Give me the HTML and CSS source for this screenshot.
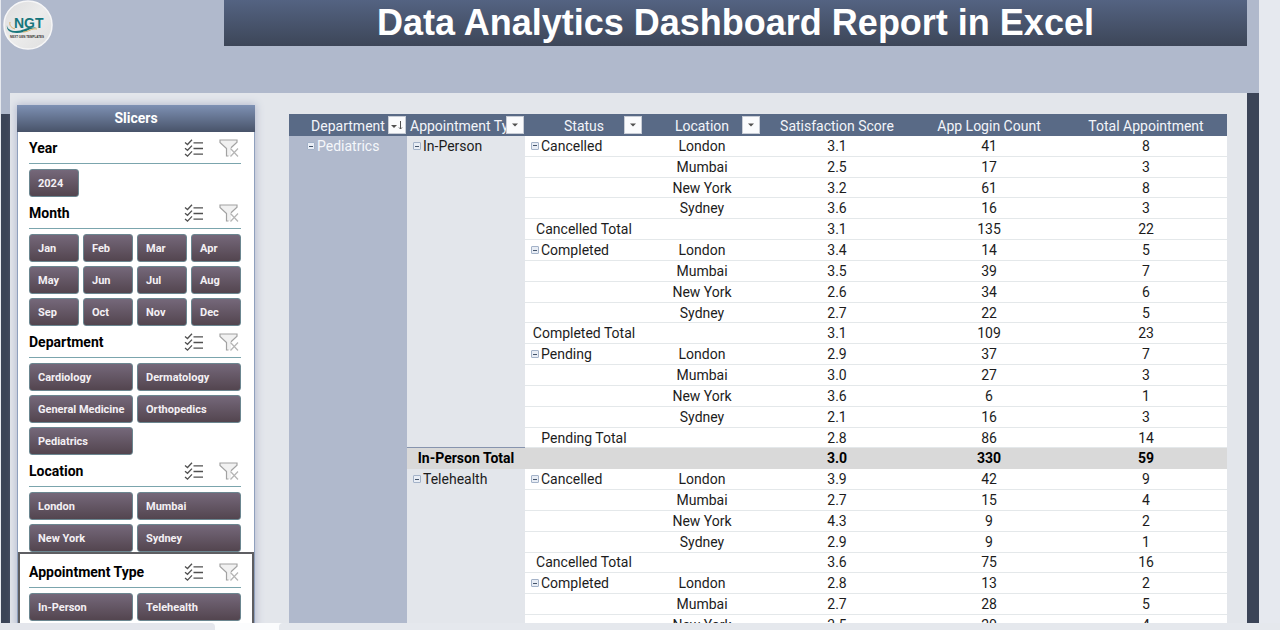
FILE: index.html
```html
<!DOCTYPE html>
<html lang="en">
<head>
<meta charset="utf-8">
<meta name="viewport" content="width=device-width, initial-scale=1">
<title>Data Analytics Dashboard Report in Excel</title>
<link rel="stylesheet" href="styles.css">
</head>
<body>
<svg class="sprites" aria-hidden="true">
  <symbol id="i-multi" viewBox="0 0 20 18">
    <g fill="none" stroke="#505050" stroke-width="1.3">
      <path d="M1 3.500l2.500 2L8 .8M1 9.300l2.500 2L8 6.600M1 15.100l2.500 2L8 12.400"/>
      <path d="M9.500 3.800H19M9.500 9.500H19M9.500 15.200H19"/>
    </g>
  </symbol>
  <symbol id="i-clear" viewBox="0 0 20 18">
    <path d="M1 1h17v2.500l-6 6V17H8V9.500l-7-6z" fill="#f1f1f1"/>
    <path d="M12 8.800l6-5.500V1H1v2.500l6.500 6V17h2" fill="none" stroke="#a2a2a2" stroke-width="1.200"/>
    <path d="M11.500 9.500l7.500 8M19 9.500l-7.500 8" fill="none" stroke="#b5b5b5" stroke-width="1.200"/>
  </symbol>
</svg>

<div class="app">
  <div class="viewport">
    <div class="canvas">
      <header class="top">
        <svg class="logo" viewBox="0 0 50 50" role="img" aria-label="NGT Next Gen Templates">
          <defs>
            <linearGradient id="disc" x1="0" y1="0" x2="1" y2="1"><stop offset="0" stop-color="#dcdcdd"/><stop offset=".5" stop-color="#ececec"/><stop offset="1" stop-color="#dedede"/></linearGradient>
          </defs>
          <circle cx="25" cy="25" r="24" fill="url(#disc)" stroke="#f6f6f7" stroke-width="1.500"/>
          <path d="M4 25c0 4 4 6 9 6 8 0 11-5 21-3-8 0-11 5-20 5C7 33 3 30 4 25z" fill="#17767c"/>
          <path d="M7 22c-1 4 2 6 5 7M20 32c6 0 8-4 14-3" fill="none" stroke="#d8b26b" stroke-width="1"/>
          <text class="logo-name" x="11" y="28">NGT</text>
          <text class="logo-tag" x="7" y="38">NEXT GEN TEMPLATES</text>
        </svg>
        <h1 class="title">Data Analytics Dashboard Report in Excel</h1>
      </header>

      <main class="body">
        <div class="board">
          <aside class="slicers">
            <h2 class="slicers-title">Slicers</h2>

            <section class="slicer">
              <div class="slicer-head"><h3>Year</h3><button class="tool" aria-label="Multi-select year"><svg><use href="#i-multi"/></svg></button><button class="tool" aria-label="Clear year filter"><svg><use href="#i-clear"/></svg></button></div>
              <div class="items items-4"><button>2024</button></div>
            </section>

            <section class="slicer">
              <div class="slicer-head"><h3>Month</h3><button class="tool" aria-label="Multi-select month"><svg><use href="#i-multi"/></svg></button><button class="tool" aria-label="Clear month filter"><svg><use href="#i-clear"/></svg></button></div>
              <div class="items items-4"><button>Jan</button><button>Feb</button><button>Mar</button><button>Apr</button><button>May</button><button>Jun</button><button>Jul</button><button>Aug</button><button>Sep</button><button>Oct</button><button>Nov</button><button>Dec</button></div>
            </section>

            <section class="slicer">
              <div class="slicer-head"><h3>Department</h3><button class="tool" aria-label="Multi-select department"><svg><use href="#i-multi"/></svg></button><button class="tool" aria-label="Clear department filter"><svg><use href="#i-clear"/></svg></button></div>
              <div class="items items-2"><button>Cardiology</button><button>Dermatology</button><button>General Medicine</button><button>Orthopedics</button><button>Pediatrics</button></div>
            </section>

            <section class="slicer">
              <div class="slicer-head"><h3>Location</h3><button class="tool" aria-label="Multi-select location"><svg><use href="#i-multi"/></svg></button><button class="tool" aria-label="Clear location filter"><svg><use href="#i-clear"/></svg></button></div>
              <div class="items items-2"><button>London</button><button>Mumbai</button><button>New York</button><button>Sydney</button></div>
            </section>

            <section class="slicer slicer-active">
              <div class="slicer-head"><h3>Appointment Type</h3><button class="tool" aria-label="Multi-select appointment type"><svg><use href="#i-multi"/></svg></button><button class="tool" aria-label="Clear appointment type filter"><svg><use href="#i-clear"/></svg></button></div>
              <div class="items items-2"><button>In-Person</button><button>Telehealth</button></div>
            </section>
          </aside>

          <div class="pivot-wrap">
            <table class="pivot">
              <colgroup><col class="c-field"><col class="c-field"><col class="c-field"><col class="c-field"><col class="c-num"><col class="c-num"><col></colgroup>
              <thead>
                <tr>
                  <th>Department<button class="filter" aria-label="Sort and filter department"><svg viewBox="0 0 16 16"><path d="M2 8h6l-3 3z" fill="#505050"/><path d="M11.500 4v8M10 10.500l1.500 1.500 1.500-1.500" fill="none" stroke="#505050"/></svg></button></th>
                  <th class="th-left">Appointment Type<button class="filter" aria-label="Filter appointment type"><svg viewBox="0 0 16 16"><path d="M5 6.500h6l-3 3z" fill="#505050"/></svg></button></th>
                  <th>Status<button class="filter" aria-label="Filter status"><svg viewBox="0 0 16 16"><path d="M5 6.500h6l-3 3z" fill="#505050"/></svg></button></th>
                  <th>Location<button class="filter" aria-label="Filter location"><svg viewBox="0 0 16 16"><path d="M5 6.500h6l-3 3z" fill="#505050"/></svg></button></th>
                  <th>Satisfaction Score</th><th>App Login Count</th><th>Total Appointment</th>
                </tr>
              </thead>
              <tbody>
                <tr><td class="dept" rowspan="24"><button class="toggle" aria-label="Collapse Pediatrics"></button>Pediatrics</td><td class="type" rowspan="15"><button class="toggle" aria-label="Collapse In-Person"></button>In-Person</td><td class="group"><button class="toggle" aria-label="Collapse Cancelled"></button>Cancelled</td><td>London</td><td>3.1</td><td>41</td><td>8</td></tr>
                <tr><td></td><td>Mumbai</td><td>2.5</td><td>17</td><td>3</td></tr>
                <tr><td></td><td>New York</td><td>3.2</td><td>61</td><td>8</td></tr>
                <tr><td></td><td>Sydney</td><td>3.6</td><td>16</td><td>3</td></tr>
                <tr><td>Cancelled Total</td><td></td><td>3.1</td><td>135</td><td>22</td></tr>
                <tr><td class="group"><button class="toggle" aria-label="Collapse Completed"></button>Completed</td><td>London</td><td>3.4</td><td>14</td><td>5</td></tr>
                <tr><td></td><td>Mumbai</td><td>3.5</td><td>39</td><td>7</td></tr>
                <tr><td></td><td>New York</td><td>2.6</td><td>34</td><td>6</td></tr>
                <tr><td></td><td>Sydney</td><td>2.7</td><td>22</td><td>5</td></tr>
                <tr><td>Completed Total</td><td></td><td>3.1</td><td>109</td><td>23</td></tr>
                <tr><td class="group"><button class="toggle" aria-label="Collapse Pending"></button>Pending</td><td>London</td><td>2.9</td><td>37</td><td>7</td></tr>
                <tr><td></td><td>Mumbai</td><td>3.0</td><td>27</td><td>3</td></tr>
                <tr><td></td><td>New York</td><td>3.6</td><td>6</td><td>1</td></tr>
                <tr><td></td><td>Sydney</td><td>2.1</td><td>16</td><td>3</td></tr>
                <tr><td>Pending Total</td><td></td><td>2.8</td><td>86</td><td>14</td></tr>
                <tr class="total"><td>In-Person Total</td><td></td><td></td><td>3.0</td><td>330</td><td>59</td></tr>
                <tr><td class="type" rowspan="8"><button class="toggle" aria-label="Collapse Telehealth"></button>Telehealth</td><td class="group"><button class="toggle" aria-label="Collapse Cancelled"></button>Cancelled</td><td>London</td><td>3.9</td><td>42</td><td>9</td></tr>
                <tr><td></td><td>Mumbai</td><td>2.7</td><td>15</td><td>4</td></tr>
                <tr><td></td><td>New York</td><td>4.3</td><td>9</td><td>2</td></tr>
                <tr><td></td><td>Sydney</td><td>2.9</td><td>9</td><td>1</td></tr>
                <tr><td>Cancelled Total</td><td></td><td>3.6</td><td>75</td><td>16</td></tr>
                <tr><td class="group"><button class="toggle" aria-label="Collapse Completed"></button>Completed</td><td>London</td><td>2.8</td><td>13</td><td>2</td></tr>
                <tr><td></td><td>Mumbai</td><td>2.7</td><td>28</td><td>5</td></tr>
                <tr><td></td><td>New York</td><td>3.5</td><td>20</td><td>4</td></tr>
              </tbody>
            </table>
          </div>
        </div>
      </main>
    </div>
  </div>
  <footer class="tabs"><div class="tab-start"></div><div class="tab-rest"></div></footer>
</div>
</body>
</html>
```

FILE: styles.css
```css
* { box-sizing: border-box; }

body {
  margin: 0;
  font-family: Roboto, "Liberation Sans", sans-serif;
  font-size: 14px;
  color: #1c1c1c;
  background: #e6e9ef;
}

h1, h2, h3 { margin: 0; }
button { font: inherit; padding: 0; border: 0; cursor: pointer; }
.sprites { display: none; }

.app {
  height: 100vh;
  display: flex;
  flex-direction: column;
}

.viewport {
  flex: 1;
  min-height: 0;
  overflow: hidden;
  display: flex;
  padding: 0 21px 0 1px;
}

.canvas {
  flex: 1;
  min-width: 0;
  display: flex;
  flex-direction: column;
  background: #b0b9cc;
}

/* Top band */
.top {
  height: 93px;
  flex: none;
  display: flex;
  align-items: flex-start;
  gap: 171px;
  padding: 0 12px 0 2px;
}
.logo { width: 50px; height: 50px; flex: none; }
.logo-name { font: 900 14px "Liberation Sans", sans-serif; fill: #17767c; }
.logo-tag { font: 700 3px "Liberation Sans", sans-serif; fill: #333; }
.title {
  flex: 1;
  min-width: 0;
  text-align: center;
  font: 700 36px/46px "Liberation Sans", sans-serif;
  color: #fff;
  background: linear-gradient(#546382, #3d4658);
  white-space: nowrap;
}

/* Board */
.body {
  flex: 1;
  min-height: 0;
  display: flex;
  padding: 0 12px 0 9px;
  background:
    linear-gradient(#3b4457, #3b4457) right top / 12px 100% no-repeat,
    linear-gradient(#3b4457, #3b4457) left 21px / 9px 100% no-repeat #b0b9cc;
}
.board {
  flex: 1;
  min-width: 0;
  display: flex;
  align-items: flex-start;
  gap: 34px;
  padding: 12px 20px 0 7px;
  background: #e3e6eb;
}

/* Slicers */
.slicers {
  width: 238px;
  flex: none;
  background: #fff;
  box-shadow: 0 0 8px 1px #b4bacf, inset 0 0 0 1px #8fa0bd;
}
.slicers-title {
  height: 27px;
  font-size: 14px;
  line-height: 27px;
  text-align: center;
  color: #fff;
  background: linear-gradient(#7e91b4, #485369);
}
.slicer { padding: 0 14px 0 12px; }
.slicer-active { padding: 0 11px 12px 9px; margin: 0 1px; border: 2px solid #5e5e62; }
.slicer-head {
  display: flex;
  align-items: center;
  gap: 15px;
  height: 32px;
  padding-right: 2px;
  border-bottom: 1px solid #7ba5ad;
}
.slicer-active .slicer-head { height: 34px; padding-top: 2px; }
.slicer-head h3 { flex: 1; font-size: 14px; color: #000; white-space: nowrap; }
.tool { background: none; width: 20px; height: 18px; }
.tool svg { display: block; width: 20px; height: 18px; }
.items {
  display: grid;
  gap: 4px;
  padding-top: 5px;
}
.items-4 { grid-template-columns: repeat(4, 1fr); }
.items-2 { grid-template-columns: repeat(2, 1fr); }
.items button {
  height: 28px;
  padding-left: 8px;
  text-align: left;
  font-size: 11px;
  font-weight: 700;
  color: #f4f0f4;
  white-space: nowrap;
  border: 1px solid #6b8690;
  border-radius: 3px;
  background: linear-gradient(#75687a, #53454f);
}

/* Pivot table */
.pivot-wrap { flex: 1; min-width: 0; padding-top: 9px; }
.pivot {
  width: 100%;
  height: 522px;
  table-layout: fixed;
  border-collapse: separate;
  border-spacing: 0;
  background: #fff;
}
.pivot thead tr { height: 22px; }
.c-field { width: 118px; }
.c-num { width: 152px; }
.pivot th, .pivot td { padding: 0; line-height: 18px; text-align: center; white-space: nowrap; }
.pivot th {
  position: relative;
  height: 22px;
  padding-top: 1px;
  overflow: hidden;
  font-weight: 400;
  color: #f3f5fa;
  background: #596a86;
}
.pivot .th-left { text-align: left; padding-left: 3px; }
.pivot td { border-bottom: 1px solid #e4e8ea; }
.pivot .dept, .pivot .type { text-align: left; vertical-align: top; border: 0; line-height: 21px; }
.pivot .dept { padding-left: 18px; color: #f5f7fb; background: #b0b9cc; }
.pivot .type { padding-left: 6px; background: #e3e6eb; }
.pivot .group { text-align: left; padding-left: 6px; }
.pivot .total td { font-weight: 700; color: #000; background: #d9d9d9; border-color: #d9d9d9; }
.pivot .total td:first-child { box-shadow: 0 -1px #8794ae; }

.filter {
  position: absolute;
  right: 1px;
  top: 2px;
  width: 18px;
  height: 18px;
  background: #fafbfd;
  border: 1px solid #c8cdd6;
}
.filter svg { display: block; width: 16px; height: 16px; }
.toggle {
  width: 8px;
  height: 8px;
  margin-right: 2px;
  vertical-align: 2px;
  border: 1px solid #a3b2c8;
  border-radius: 1px;
  background: linear-gradient(#44546a, #44546a) center / 4px 1px no-repeat #e8edf5;
}

/* Sheet tab strip */
.tabs { height: 7px; flex: none; display: flex; gap: 64px; background: #fbfcfd; }
.tab-start { width: 215px; background: #e4e6ec; border-radius: 0 4px 0 0; }
.tab-rest { flex: 1; background: #e5e8ed; border-radius: 4px 0 0 0; }
```
